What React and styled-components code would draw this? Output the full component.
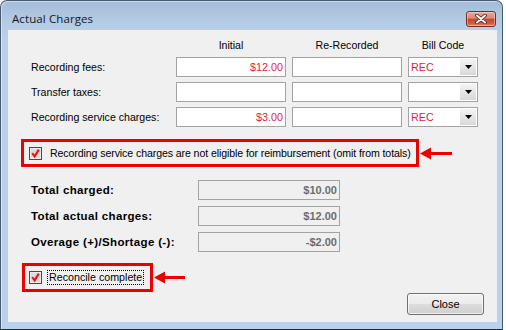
import React from "react";
import styled, { createGlobalStyle } from "styled-components";

const GlobalStyle = createGlobalStyle`
  html, body { margin: 0; padding: 0; background: #ffffff; }
  body {
    font-family: "Liberation Sans", Arial, sans-serif;
    font-size: 10.6px;
    color: #000;
  }
  * { box-sizing: border-box; }
`;

const Window = styled.div`
  width: 503px;
  height: 330px;
  border: 1px solid #4a5a6e;
  border-bottom-color: #1f2a36;
  border-radius: 7px 7px 0 0;
  background: linear-gradient(to bottom, #a3bcd8 0px, #b4cbe4 20px, #bad1ea 40px, #b9d1ea 100%);
  padding: 0 5px 7px 7px;
  display: flex;
  flex-direction: column;
  box-shadow: inset 1px 1px 0 rgba(255,255,255,0.45);
`;

const TitleBar = styled.div`
  height: 29px;
  display: flex;
  align-items: center;
  justify-content: space-between;
  padding: 6px 1px 0 4px;
`;

const Title = styled.span`
  font-family: "Open Sans", "Noto Sans", sans-serif;
  font-size: 11.5px;
  color: #101826;
  letter-spacing: 0.1px;
`;

const CloseX = styled.div`
  width: 30px;
  height: 16px;
  border: 1px solid #7d2a1f;
  border-radius: 3px;
  background: linear-gradient(to bottom, #e9a899 0%, #dc8670 45%, #c5452d 50%, #cc5a3f 80%, #e08a6c 100%);
  display: flex;
  align-items: center;
  justify-content: center;
  box-shadow: inset 0 0 0 1px rgba(255,255,255,0.35);
`;

const Client = styled.div`
  flex: 1;
  background: #f0f0f0;
  padding: 8px 13px 7px 13px;
  display: flex;
  flex-direction: column;
`;

const ChargesGrid = styled.div`
  display: grid;
  grid-template-columns: 139px 110px 110px 70px;
  grid-template-rows: 14px 20px 20px 20px;
  column-gap: 6px;
  row-gap: 5px;
  margin-left: 10px;
`;

const ColHead = styled.div`
  text-align: center;
  line-height: 14px;
`;

const FieldLabel = styled.div`
  display: flex;
  align-items: center;
  white-space: nowrap;
  font-weight: ${(p) => (p.$bold ? "bold" : "normal")};
  font-size: ${(p) => (p.$bold ? "11.5px" : "10.6px")};
  letter-spacing: ${(p) => (p.$bold ? "0.35px" : "0")};
`;

const TextBox = styled.div`
  height: 20px;
  border: 1px solid #a3a3a3;
  background: ${(p) => (p.$readOnly ? "#f0f0f0" : "#ffffff")};
  color: ${(p) => (p.$readOnly ? "#6d6d6d" : "#e41b45")};
  font-weight: ${(p) => (p.$readOnly ? "bold" : "normal")};
  font-size: ${(p) => (p.$readOnly ? "11px" : "10.8px")};
  display: flex;
  align-items: center;
  justify-content: flex-end;
  padding-right: 2px;
`;

const Combo = styled.div`
  height: 20px;
  border: 1px solid #a3a3a3;
  background: #fff;
  display: flex;
  align-items: stretch;
`;

const ComboText = styled.span`
  flex: 1;
  color: #e41b45;
  font-size: 10.8px;
  display: flex;
  align-items: center;
  padding-left: 2px;
`;

const ComboButton = styled.span`
  width: 16px;
  margin: 1px;
  background: linear-gradient(to bottom, #f4f4f4 0%, #e6e6e6 50%, #d8d8d8 100%);
  display: flex;
  align-items: center;
  justify-content: center;
`;

const AnnotRow = styled.div`
  display: flex;
  align-items: center;
  gap: 1px;
  margin-top: ${(p) => p.$top}px;
  margin-left: ${(p) => p.$left || 0}px;
`;

const RedBox = styled.div`
  flex-shrink: 0;
  width: ${(p) => p.$width}px;
  height: ${(p) => p.$height}px;
  border: 3px solid #ee0000;
  display: flex;
  align-items: center;
  padding-left: ${(p) => p.$padLeft}px;
  gap: ${(p) => p.$gap}px;
`;

const CheckText = styled.span`
  white-space: nowrap;
  line-height: 13px;
  padding: 0 1px;
  font-size: ${(p) => (p.$focused ? "10.7px" : "10.6px")};
  letter-spacing: ${(p) => (p.$focused ? "0" : "-0.1px")};
  border: 1px ${(p) => (p.$focused ? "dotted #000" : "solid transparent")};
`;

const TotalsGrid = styled.div`
  display: grid;
  grid-template-columns: 167px 142px;
  grid-auto-rows: 20px;
  row-gap: 6px;
  margin-top: 13px;
  margin-left: 10px;
`;

const ButtonRow = styled.div`
  display: flex;
  justify-content: flex-end;
  margin-top: 1px;
`;

const PushButton = styled.button`
  width: 77px;
  height: 22px;
  border: 1px solid #707070;
  border-radius: 3px;
  background: linear-gradient(to bottom, #f2f2f2 0%, #ebebeb 50%, #dddddd 51%, #cfcfcf 100%);
  box-shadow: inset 0 0 0 1px rgba(255,255,255,0.7);
  font-family: "Liberation Sans", Arial, sans-serif;
  font-size: 11px;
  color: #000;
  padding: 0;
`;

const CheckIcon = styled.svg`
  flex-shrink: 0;
  display: block;
`;

const ArrowIcon = styled.svg`
  flex-shrink: 0;
  display: block;
`;

function CheckBox() {
  return (
    <CheckIcon width="13" height="13" viewBox="0 0 13 13">
      <rect x="0.5" y="0.5" width="12" height="12" fill="#dcdcdc" stroke="#e8001c" />
      <rect x="1.5" y="1.5" width="10" height="10" fill="none" stroke="#ececec" />
      <path d="M3.2 6.2 L5.6 9.4 L9.8 2.6" fill="none" stroke="#ee1010" strokeWidth="2" strokeLinejoin="miter" />
    </CheckIcon>
  );
}

function Arrow({ width }) {
  return (
    <ArrowIcon width={width} height="13" viewBox={`0 0 ${width} 13`}>
      <polygon points="0,6.5 11,0.5 11,12.5" fill="#ee0000" />
      <rect x="10" y="5" width={width - 10} height="3" fill="#ee0000" />
    </ArrowIcon>
  );
}

function DropArrow() {
  return (
    <svg width="7" height="4" viewBox="0 0 7 4">
      <polygon points="0,0 7,0 3.5,4" fill="#000" />
    </svg>
  );
}

function CloseGlyph() {
  return (
    <svg width="12" height="10" viewBox="0 0 12 10">
      <path d="M2 1.5 L10 8.5 M10 1.5 L2 8.5" stroke="#5a1a10" strokeWidth="3.6" strokeLinecap="round" />
      <path d="M2 1.5 L10 8.5 M10 1.5 L2 8.5" stroke="#ffffff" strokeWidth="2" strokeLinecap="round" />
    </svg>
  );
}

const rows = [
  { label: "Recording fees:", initial: "$12.00", code: "REC" },
  { label: "Transfer taxes:", initial: "", code: "" },
  { label: "Recording service charges:", initial: "$3.00", code: "REC" },
];

const totals = [
  { label: "Total charged:", value: "$10.00" },
  { label: "Total actual charges:", value: "$12.00" },
  { label: "Overage (+)/Shortage (-):", value: "-$2.00" },
];

export default function App() {
  return (
    <>
      <GlobalStyle />
      <Window>
        <TitleBar>
          <Title>Actual Charges</Title>
          <CloseX>
            <CloseGlyph />
          </CloseX>
        </TitleBar>
        <Client>
          <ChargesGrid>
            <div />
            <ColHead>Initial</ColHead>
            <ColHead>Re-Recorded</ColHead>
            <ColHead>Bill Code</ColHead>
            {rows.map((r) => (
              <React.Fragment key={r.label}>
                <FieldLabel>{r.label}</FieldLabel>
                <TextBox>{r.initial}</TextBox>
                <TextBox />
                <Combo>
                  <ComboText>{r.code}</ComboText>
                  <ComboButton>
                    <DropArrow />
                  </ComboButton>
                </Combo>
              </React.Fragment>
            ))}
          </ChargesGrid>

          <AnnotRow $top={12}>
            <RedBox $width={398} $height={28} $padLeft={5} $gap={6}>
              <CheckBox />
              <CheckText>Recording service charges are not eligible for reimbursement (omit from totals)</CheckText>
            </RedBox>
            <Arrow width={32} />
          </AnnotRow>

          <TotalsGrid>
            {totals.map((t) => (
              <React.Fragment key={t.label}>
                <FieldLabel $bold>{t.label}</FieldLabel>
                <TextBox $readOnly>{t.value}</TextBox>
              </React.Fragment>
            ))}
          </TotalsGrid>

          <AnnotRow $top={11} $left={1}>
            <RedBox $width={131} $height={29} $padLeft={4} $gap={5}>
              <CheckBox />
              <CheckText $focused>Reconcile complete</CheckText>
            </RedBox>
            <Arrow width={31} />
          </AnnotRow>

          <ButtonRow>
            <PushButton>Close</PushButton>
          </ButtonRow>
        </Client>
      </Window>
    </>
  );
}
